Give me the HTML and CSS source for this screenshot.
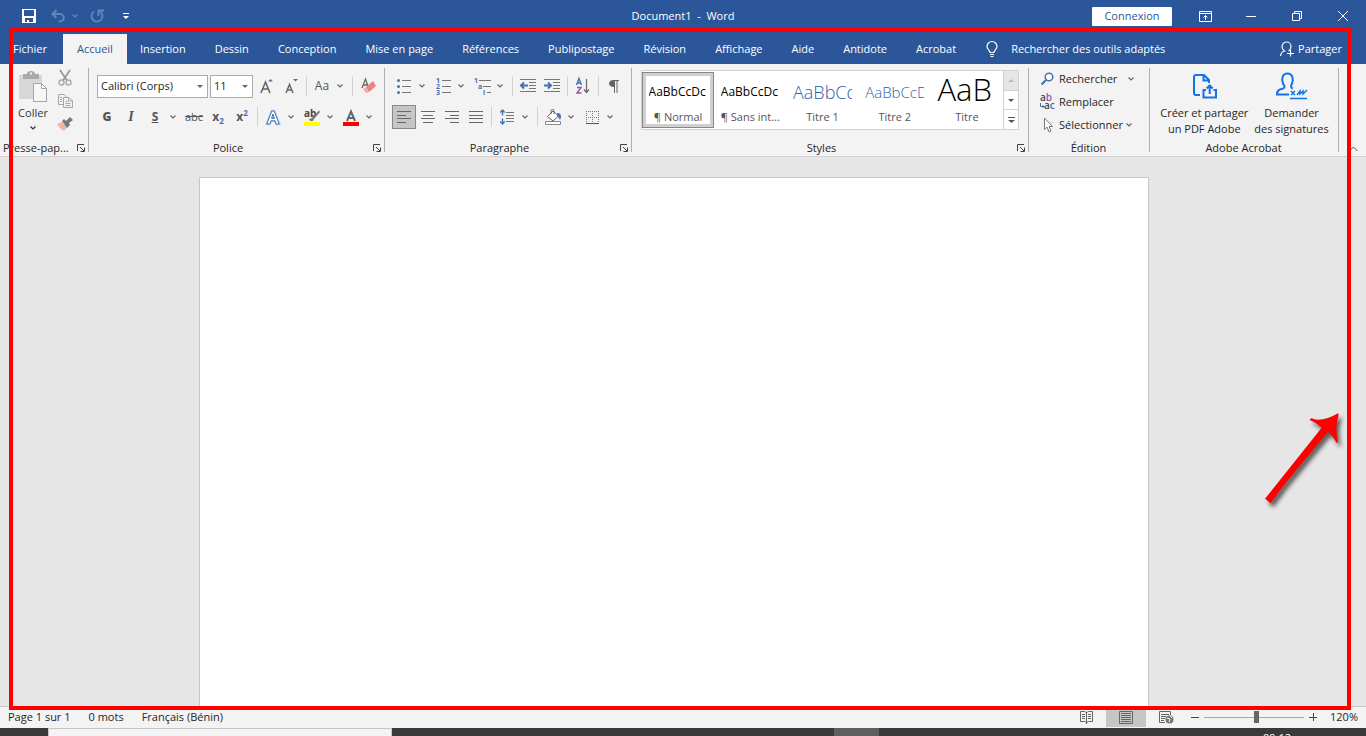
FILE: index.html
```
<!DOCTYPE html>
<html lang="fr">

<head>
    <meta charset="UTF-8">
    <meta name="viewport" content="width=device-width, initial-scale=1.0">
    <title>Document1 - Word</title>
    <link rel="stylesheet" href="styles.css">
</head>

<body>
    <svg class="defs" aria-hidden="true">
        <symbol id="chevron" viewBox="0 0 6 4"><path d="M.5.5 3 3 5.5.5" fill="none" stroke="currentColor" stroke-width="1.2" /></symbol>
        <symbol id="launcher" viewBox="0 0 8 8"><path d="M.5 7V.5H7M3 3l4 4M7.5 3.5v4h-4" fill="none" stroke="#444" /></symbol>
    </svg>

    <!-- Title bar -->
    <header class="titlebar">
        <div class="quick">
            <button class="quick-btn" aria-label="Enregistrer">
                <svg width="14" height="14"><path d="M0 0h14v14H0zM2 1v6h10V1zM3 9v4h2v-2h2v2h4V9z" fill="#fff" fill-rule="evenodd" /></svg>
            </button>
            <button class="quick-btn faded" aria-label="Annuler">
                <svg width="14" height="14"><path d="M5.5 1 1.5 5l4 4M2 5h7a3.500 3.500 0 0 1 0 7.500H7.500" fill="none" stroke="currentColor" stroke-width="2" /></svg>
            </button>
            <svg class="faded" width="6" height="4"><use href="#chevron" /></svg>
            <button class="quick-btn redo faded" aria-label="Répéter">
                <svg width="14" height="14"><path d="M4 2.5a5.500 5.500 0 1 0 6.500.3M8.500 7V1.500H14" fill="none" stroke="currentColor" stroke-width="1.8" /></svg>
            </button>
            <button class="quick-btn more" aria-label="Personnaliser la barre">
                <svg width="6" height="6"><path d="M0 0h6v1H0zM0 3h6L3 6z" fill="#fff" /></svg>
            </button>
        </div>
        <h1 class="title">Document1&nbsp; -&nbsp; Word</h1>
        <div class="window-tools">
            <button class="signin">Connexion</button>
            <button class="win-btn" aria-label="Options du ruban">
                <svg width="13" height="11"><path d="M.5.5h12v10H.5zM.5 2.5h12M6.5 9V4.5M4.500 6.500l2-2 2 2" fill="none" stroke="#fff" /></svg>
            </button>
            <button class="win-btn" aria-label="Réduire">
                <svg width="10" height="10"><path d="M0 5.5h10" stroke="#fff" /></svg>
            </button>
            <button class="win-btn" aria-label="Restaurer">
                <svg width="10" height="10"><path d="M.5 2.5h7v7h-7zM2.5 2.5v-2h7v7h-2" fill="none" stroke="#fff" /></svg>
            </button>
            <button class="win-btn" aria-label="Fermer">
                <svg width="10" height="10"><path d="m0 0 10 10M10 0 0 10" stroke="#fff" /></svg>
            </button>
        </div>
    </header>

    <!-- Tabs -->
    <nav class="tabs">
        <button class="tab">Fichier</button>
        <button class="tab active">Accueil</button>
        <button class="tab">Insertion</button>
        <button class="tab">Dessin</button>
        <button class="tab">Conception</button>
        <button class="tab">Mise en page</button>
        <button class="tab">Références</button>
        <button class="tab">Publipostage</button>
        <button class="tab">Révision</button>
        <button class="tab">Affichage</button>
        <button class="tab">Aide</button>
        <button class="tab">Antidote</button>
        <button class="tab">Acrobat</button>
        <button class="tell-me">
            <svg width="12" height="16"><path d="M4 11.5C4 9 1 8.5 1 5.5a5 5 0 0 1 10 0C11 8.5 8 9 8 11.5zM4 13.5h4M4.500 15.5h3" fill="none" stroke="#fff" stroke-width="1.2" /></svg>
            Rechercher des outils adaptés
        </button>
        <button class="share">
            <svg width="14" height="16"><path d="M.5 15c.3-3 2-4.500 4-5C2.500 8.500 2 7 2 5.500a4.500 4.500 0 1 1 9 0C11 7.500 10 9 8.500 10M10.500 9v6.500M7 12.500h7" fill="none" stroke="#fff" stroke-width="1.2" /></svg>
            Partager
        </button>
    </nav>

    <!-- Ribbon -->
    <section class="ribbon">
        <div class="group clipboard">
            <div class="clip-body">
                <button class="paste">
                    <svg width="28" height="31">
                        <path d="M0 4h23v24H0z" fill="#d9d6da" />
                        <path d="M4 3h4a4 3 0 0 1 8 0h4v5H4z" fill="#a9a9a9" />
                        <path d="M11 1.5h2v2h-2z" fill="#f3f3f3" />
                        <path d="M14.5 12.5h8l5 5v13h-13z" fill="#f6f6f6" stroke="#a5a5a5" />
                        <path d="M22.5 12.5v5h5" fill="none" stroke="#a5a5a5" />
                    </svg>
                    <span>Coller</span>
                    <svg width="6" height="4"><use href="#chevron" /></svg>
                </button>
                <div class="clip-tools">
                    <button class="btn" aria-label="Couper">
                        <svg width="14" height="16"><path d="m2 0 7 10.500M12 0 5 10.500" stroke="#999" stroke-width="1.8" /><circle cx="3.500" cy="12.500" r="2.500" fill="none" stroke="#aaa" stroke-width="1.4" /><circle cx="10.500" cy="12.500" r="2.500" fill="none" stroke="#aaa" stroke-width="1.4" /></svg>
                    </button>
                    <button class="btn" aria-label="Copier">
                        <svg width="15" height="14"><path d="M5 10.5H.5V.5H6L8.500 3M5.5 3.5H11l3.500 3.500v6.500h-9zM10.5 3.5V7h4M2 3.5h2M2 5.5h2M2 7.5h2M7.500 7.500h2M7.500 9.500h5M7.500 11.500h5" fill="none" stroke="#a5a5a5" /></svg>
                    </button>
                    <button class="btn" aria-label="Reproduire la mise en forme">
                        <svg width="16" height="14"><path d="m0 7 5-2 5 5-3 4C4 12.500 2 10.500 0 7z" fill="#f0b99b" /><path d="M5 4 7 2l2 2 4-4 3 3-4 3 1 2-3 3z" fill="#777" /></svg>
                    </button>
                </div>
            </div>
            <div class="group-label"><span>Presse-pap...</span><button class="launch" aria-label="Presse-papiers"><svg width="8" height="8"><use href="#launcher" /></svg></button></div>
        </div>

        <div class="group font">
            <div class="rows">
                <div class="row fields">
                    <select class="font-name" aria-label="Police"><option>Calibri (Corps)</option></select>
                    <select class="font-size" aria-label="Taille"><option>11</option></select>
                    <button class="btn" aria-label="Agrandir">
                        <svg width="14" height="16"><path d="M1 15 5.500 4 10 15M2.500 11h6" fill="none" stroke="#666" stroke-width="1.6" /><path d="M8 3.500 10.500 1 13 3.500z" fill="#4472b0" /></svg>
                    </button>
                    <button class="btn" aria-label="Réduire la police">
                        <svg width="14" height="16"><path d="M2 15 5.500 6.500 9 15M3 12h5" fill="none" stroke="#666" stroke-width="1.5" /><path d="M9 1h5l-2.500 2.500z" fill="#4472b0" /></svg>
                    </button>
                    <i class="sep"></i>
                    <button class="btn case">Aa</button><button class="arrow" aria-label="Casse"><svg width="6" height="4"><use href="#chevron" /></svg></button>
                    <i class="sep"></i>
                    <button class="btn" aria-label="Effacer la mise en forme">
                        <svg width="15" height="16"><path d="M1 10 4.500 1 7 8M2 7h4" fill="none" stroke="#666" stroke-width="1.3" /><path d="m5 9 7-6 3 5-7 6z" fill="#f08080" /><path d="m2 11 3-2 3 5-3 1z" fill="#f3aaa8" /></svg>
                    </button>
                </div>
                <div class="row">
                    <button class="btn letter"><b>G</b></button>
                    <button class="btn letter italic">I</button>
                    <button class="btn letter"><u>S</u></button><button class="arrow" aria-label="Soulignement"><svg width="6" height="4"><use href="#chevron" /></svg></button>
                    <button class="btn strike">abc</button>
                    <button class="btn letter">x<sub>2</sub></button>
                    <button class="btn letter">x<sup>2</sup></button>
                    <i class="sep"></i>
                    <button class="btn" aria-label="Effets de texte">
                        <svg width="14" height="15"><path d="M.8 14 5.800 1h2.400l5 13h-3l-1-3.200H4.800L3.800 14zM5.600 8.500h2.800L7 4z" fill="#fff" stroke="#b9d3f0" stroke-width="2.6" /><path d="M.8 14 5.800 1h2.400l5 13h-3l-1-3.200H4.800L3.800 14zM5.600 8.500h2.800L7 4z" fill="#fff" stroke="#4472b0" /></svg>
                    </button><button class="arrow" aria-label="Choix d'effets"><svg width="6" height="4"><use href="#chevron" /></svg></button>
                    <button class="btn marker" aria-label="Surlignage">
                        <svg width="16" height="17"><text x="0" y="8">ab</text><path d="M15 1.500 8 9l-3 1 1 2h3l1-2 6-7z" fill="#777" /><path d="M0 13h16v4H0z" fill="#ff0" /></svg>
                    </button><button class="arrow" aria-label="Couleur de surlignage"><svg width="6" height="4"><use href="#chevron" /></svg></button>
                    <button class="btn" aria-label="Couleur de police">
                        <svg width="16" height="17"><path d="M4 12 8 2.500 12 12M5.500 9h5" fill="none" stroke="#666" stroke-width="2" /><path d="M0 13h16v4H0z" fill="red" /></svg>
                    </button><button class="arrow" aria-label="Choix de couleur"><svg width="6" height="4"><use href="#chevron" /></svg></button>
                </div>
            </div>
            <div class="group-label"><span>Police</span><button class="launch" aria-label="Options de police"><svg width="8" height="8"><use href="#launcher" /></svg></button></div>
        </div>

        <div class="group paragraph">
            <div class="rows">
                <div class="row">
                    <button class="btn" aria-label="Puces">
                        <svg width="14" height="15"><path d="M5 1.500h9M5 7.500h9M5 13.500h9" stroke="#777" /><circle cx="1.500" cy="1.500" r="1.500" fill="#4472b0" /><circle cx="1.500" cy="7.500" r="1.500" fill="#4472b0" /><circle cx="1.500" cy="13.500" r="1.500" fill="#4472b0" /></svg>
                    </button><button class="arrow" aria-label="Choix de puces"><svg width="6" height="4"><use href="#chevron" /></svg></button>
                    <button class="btn numbers" aria-label="Numérotation">
                        <svg width="15" height="17"><path d="M6 2.500h9M6 8.500h9M6 14.500h9" stroke="#777" /><text x="0" y="5">1</text><text x="0" y="11">2</text><text x="0" y="17">3</text></svg>
                    </button><button class="arrow" aria-label="Choix de numérotation"><svg width="6" height="4"><use href="#chevron" /></svg></button>
                    <button class="btn numbers" aria-label="Liste à plusieurs niveaux">
                        <svg width="17" height="17"><path d="M5 2.500h12M9 8.500h8M13 14.500h4" stroke="#777" /><text x="0" y="5">1</text><text x="4" y="11">a</text><text x="9" y="17">i</text></svg>
                    </button><button class="arrow" aria-label="Choix de liste"><svg width="6" height="4"><use href="#chevron" /></svg></button>
                    <i class="sep"></i>
                    <button class="btn" aria-label="Diminuer le retrait">
                        <svg width="16" height="14"><path d="M0 .5h16M9 3.500h7M9 6.500h7M9 9.500h7M0 12.500h16" stroke="#777" /><path d="M4 3.500 1 6.500l3 3M1 6.500h7" fill="none" stroke="#4472b0" stroke-width="2" /></svg>
                    </button>
                    <button class="btn" aria-label="Augmenter le retrait">
                        <svg width="16" height="14"><path d="M0 .5h16M9 3.500h7M9 6.500h7M9 9.500h7M0 12.500h16" stroke="#777" /><path d="m4 3.500 3 3-3 3M7 6.500H0" fill="none" stroke="#4472b0" stroke-width="2" /></svg>
                    </button>
                    <i class="sep"></i>
                    <button class="btn" aria-label="Trier">
                        <svg width="14" height="16"><path d="M.5 7 3 .5 5.500 7M1.500 5h3" fill="none" stroke="#4472b0" stroke-width="1.4" /><path d="M1 9.500h4l-4 5.500h4.500" fill="none" stroke="#8a5aa5" stroke-width="1.4" /><path d="M10.500 1v13M8 11.500l2.500 3 2.500-3" fill="none" stroke="#666" stroke-width="1.2" /></svg>
                    </button>
                    <i class="sep"></i>
                    <button class="btn" aria-label="Afficher tout">
                        <svg width="10" height="13"><path d="M4.500 0H10v1H8.500v12h-1V1H6v12H5V7C2 7 0 5.700 0 3.500S2 0 4.500 0z" fill="#666" /></svg>
                    </button>
                </div>
                <div class="row">
                    <button class="btn pressed" aria-label="Aligner à gauche"><svg width="14" height="12"><path d="M0 .5h14M0 4.500h9M0 7.500h14M0 11.500h9" stroke="#666" /></svg></button>
                    <button class="btn" aria-label="Centrer"><svg width="14" height="12"><path d="M0 .5h14M2 4.500h10M0 7.500h14M2 11.500h10" stroke="#666" /></svg></button>
                    <button class="btn" aria-label="Aligner à droite"><svg width="14" height="12"><path d="M0 .5h14M5 4.500h9M0 7.500h14M5 11.500h9" stroke="#666" /></svg></button>
                    <button class="btn" aria-label="Justifier"><svg width="14" height="12"><path d="M0 .5h14M0 4.500h14M0 7.500h14M0 11.500h14" stroke="#666" /></svg></button>
                    <i class="sep"></i>
                    <button class="btn" aria-label="Interligne">
                        <svg width="14" height="16"><path d="M6 3.500h8M6 6.500h8M6 9.500h8M6 12.500h8" stroke="#777" /><path d="M2.500 1v5.500M2.500 9.500V15M.3 3.500l2.200-2.500 2.200 2.500M.3 12.500 2.500 15l2.200-2.500" fill="none" stroke="#4472b0" stroke-width="1.4" /></svg>
                    </button><button class="arrow" aria-label="Choix d'interligne"><svg width="6" height="4"><use href="#chevron" /></svg></button>
                    <i class="sep"></i>
                    <button class="btn" aria-label="Trame de fond">
                        <svg width="17" height="16"><path d="m8 2 5.500 5L8 12 2.500 7.500z" fill="#fff" stroke="#666" /><path d="M6 5V2a1.500 1.500 0 0 1 3 0v3" fill="none" stroke="#666" /><path d="M12 4c4 0 5 3 3 7-1-1-1-3-3-4z" fill="#4472b0" /><path d="M.5 12.500h15v3H.5z" fill="#fff" stroke="#888" /></svg>
                    </button><button class="arrow" aria-label="Choix de trame"><svg width="6" height="4"><use href="#chevron" /></svg></button>
                    <button class="btn" aria-label="Bordures">
                        <svg width="13" height="13"><path d="M0 .5h13M0 6.500h13M.5 0v12M6.500 0v12M12.500 0v12" fill="none" stroke="#777" stroke-dasharray="1 1" /><path d="M0 12.500h13" stroke="#555" /></svg>
                    </button><button class="arrow" aria-label="Choix de bordures"><svg width="6" height="4"><use href="#chevron" /></svg></button>
                </div>
            </div>
            <div class="group-label"><span>Paragraphe</span><button class="launch" aria-label="Options de paragraphe"><svg width="8" height="8"><use href="#launcher" /></svg></button></div>
        </div>

        <div class="group styles">
            <div class="gallery">
                <button class="style selected"><span class="preview">AaBbCcDc</span><span>¶ Normal</span></button>
                <button class="style"><span class="preview">AaBbCcDc</span><span>¶ Sans int...</span></button>
                <button class="style"><span class="preview heading1">AaBbCc</span><span>Titre 1</span></button>
                <button class="style"><span class="preview heading2">AaBbCcD</span><span>Titre 2</span></button>
                <button class="style"><span class="preview big">AaB</span><span>Titre</span></button>
                <div class="gallery-nav">
                    <button disabled aria-label="Précédent"><svg width="6" height="3"><path d="M0 3h6L3 0z" fill="#bbb" /></svg></button>
                    <button aria-label="Suivant"><svg width="6" height="3"><path d="M0 0h6L3 3z" fill="#555" /></svg></button>
                    <button aria-label="Autres"><svg width="7" height="6"><path d="M0 0h7v1H0zM0 3h7L3.500 6z" fill="#555" /></svg></button>
                </div>
            </div>
            <div class="group-label"><span>Styles</span><button class="launch" aria-label="Options de styles"><svg width="8" height="8"><use href="#launcher" /></svg></button></div>
        </div>

        <div class="group editing">
            <div class="edit-list">
                <button class="edit-btn">
                    <svg width="16" height="14"><circle cx="9" cy="5" r="3.800" fill="#fff" stroke="#4472b0" stroke-width="1.5" /><path d="M6 8 1.500 12.500" stroke="#4472b0" stroke-width="2.2" /></svg>
                    Rechercher
                    <svg class="edit-arrow far" width="6" height="4"><use href="#chevron" /></svg>
                </button>
                <button class="edit-btn">
                    <svg class="replace" width="16" height="16"><text x="0" y="7">a<tspan fill="#8a5aa5">b</tspan></text><text x="4" y="15">a<tspan fill="#4472b0">c</tspan></text><path d="M.5 9v3.500H4M2.500 11 4 12.500 2.500 14" fill="none" stroke="#4472b0" /></svg>
                    Remplacer
                </button>
                <button class="edit-btn">
                    <svg width="16" height="16"><path d="M4.500 1v11.500L7 10l2 5 2-1-2-4.500h3.500z" fill="#fff" stroke="#777" /></svg>
                    Sélectionner
                    <svg class="edit-arrow" width="6" height="4"><use href="#chevron" /></svg>
                </button>
            </div>
            <div class="group-label"><span>Édition</span></div>
        </div>

        <div class="group acrobat">
            <div class="acrobat-list">
                <button class="big-btn">
                    <svg width="26" height="28"><path d="M9 23H5a2 2 0 0 1-2-2V5a2 2 0 0 1 2-2h8l5 5v3M12.500 3v5.500H18M15 18h-2.500v7.500H25V18h-2.500M18.700 22v-8M15.700 16.500l3-3 3 3" fill="none" stroke="#1473e6" stroke-width="2" /></svg>
                    <span>Créer et partager<br>un PDF Adobe</span>
                </button>
                <button class="big-btn">
                    <svg width="32" height="28"><path d="M13 22.500H1c0-4 2-5 6-6 3-1 1-3 0-5C5 6 7 1.500 11.500 1.500S18 6 16 11.500c-1 2-2 4 1 5" fill="none" stroke="#1473e6" stroke-width="2" /><path d="M14 26.500h17M15 19l4 4M19 19l-4 4M21 23l3-4v3l3-3v3l4-4" fill="none" stroke="#1473e6" stroke-width="1.5" /></svg>
                    <span>Demander<br>des signatures</span>
                </button>
            </div>
            <div class="group-label"><span>Adobe Acrobat</span></div>
        </div>
        <button class="collapse" aria-label="Réduire le ruban"><svg width="9" height="6"><path d="m.5 5 4-4 4 4" fill="none" stroke="#555" /></svg></button>
    </section>

    <main class="workspace">
        <article class="sheet" contenteditable="true" aria-label="Document"></article>
    </main>

    <footer class="status">
        <span>Page 1 sur 1</span>
        <span>0 mots</span>
        <span>Français (Bénin)</span>
        <div class="views">
            <button class="view" aria-label="Mode lecture">
                <svg width="13" height="13"><path d="M.5.5h4l2 1 2-1h4v10h-4l-2 1-2-1h-4zM6.500 1v12M2 3.500h3M2 5.500h3M2 7.500h3M8 3.500h3M8 5.500h3M8 7.500h3" fill="none" stroke="#666" /></svg>
            </button>
            <button class="view current" aria-label="Page">
                <svg width="14" height="13"><path d="M.5.5h13v12H.5zM2 2.500h10M2 4.500h10M2 6.500h10M2 8.500h10M2 10.500h10" fill="none" stroke="#666" /></svg>
            </button>
            <button class="view" aria-label="Web">
                <svg width="15" height="13"><path d="M6 11.500H.5V.5h11V4M2 3.500h8M2 5.500h5M2 7.500h4M2 9.500h3" fill="none" stroke="#666" /><circle cx="10.500" cy="8.500" r="4" fill="#777" /><path d="m8 7 3 1-1 3M11 5l2 2" fill="none" stroke="#f3f3f3" /></svg>
            </button>
        </div>
        <button class="zoom-btn" aria-label="Zoom arrière"><svg width="8" height="8"><path d="M0 4.500h8" stroke="#444" /></svg></button>
        <input class="zoom" type="range" min="0" max="100" value="53" aria-label="Zoom">
        <button class="zoom-btn" aria-label="Zoom avant"><svg width="8" height="8"><path d="M0 4.500h8M4.500 0v8" stroke="#444" /></svg></button>
        <span class="percent">120%</span>
    </footer>

    <div class="taskbar">
        <div class="task-search"></div>
        <div class="task-app"></div>
        <time class="clock">09:12</time>
    </div>

    <!-- Highlight frame and pointer -->
    <div class="frame"></div>
    <svg class="pointer" viewBox="0 0 378 390" width="126" height="130" aria-hidden="true">
        <path d="M75 326 L120 270 L245 113 Q230 98 209 90 Q213 80 222 88 Q256 93 294 70 Q298 74 292 90 Q285 122 294 154 L290 160 Q279 136 264 126 Q242 154 224 174 Q160 252 130 288 L92 340 Z" fill="red" />
    </svg>
</body>

</html>
```
FILE: styles.css
```
* {
    box-sizing: border-box;
}

body {
    margin: 0;
    height: 100vh;
    display: flex;
    flex-direction: column;
    position: relative;
    overflow: hidden;
    background-color: #e6e6e6;
    color: #262626;
    font-family: "Open Sans", "Noto Sans", sans-serif;
    font-size: 11px;
    line-height: 16px;
}

button {
    border: 0;
    padding: 0;
    background: none;
    color: inherit;
    font: inherit;
    white-space: nowrap;
}

svg {
    display: block;
    flex-shrink: 0;
    overflow: visible;
}

.defs {
    position: absolute;
    width: 0;
    height: 0;
}

/* title bar */
.titlebar {
    display: grid;
    grid-template-columns: 1fr auto 1fr;
    align-items: center;
    height: 34px;
    padding-bottom: 2px;
    background-color: #2b579a;
    color: #fff;
}

.quick {
    display: flex;
    align-items: center;
    padding-left: 22px;
}

.quick-btn {
    margin-right: 15px;
}

.quick .faded {
    color: #5f86bd;
}

.quick .quick-btn.faded {
    margin-right: 7px;
}

.quick .redo.faded {
    margin: 0 19px 0 12px;
}

.title {
    margin: 0;
    font-size: 11px;
    font-weight: normal;
}

.window-tools {
    display: flex;
    align-items: center;
    justify-content: flex-end;
}

.signin {
    width: 80px;
    height: 19px;
    margin-right: 10px;
    border-radius: 1px;
    background-color: #fff;
    color: #2b579a;
}

.win-btn {
    display: flex;
    justify-content: center;
    width: 46px;
}

/* tabs */
.tabs {
    display: flex;
    height: 30px;
    background-color: #2b579a;
    color: #fff;
}

.tab {
    padding: 0 16px 0 13px;
}

.tab.active {
    padding: 0 14px;
    background-color: #f3f3f3;
    color: #2b579a;
}

.tell-me,
.share {
    display: flex;
    align-items: center;
}

.tell-me {
    gap: 13px;
    margin-left: 14px;
}

.share {
    gap: 4px;
    margin-left: auto;
    margin-right: 24px;
}

/* ribbon */
.ribbon {
    display: flex;
    height: 93px;
    background-color: #f3f3f3;
    border-bottom: 1px solid #d2d2d2;
}

.group {
    display: flex;
    flex-direction: column;
    justify-content: space-between;
    flex-shrink: 0;
    background: linear-gradient(#b1b1b1, #b1b1b1) right 4px / 1px 84px no-repeat;
}

.group-label {
    display: flex;
    align-items: center;
    height: 16px;
    padding-right: 4px;
}

.group-label span {
    flex: 1;
    padding-left: 2px;
    text-align: center;
}

.group-label span:not(:last-child) {
    padding: 0 6px 0 0;
}

.rows {
    display: flex;
    flex-direction: column;
    gap: 7px;
    padding-top: 10px;
}

.row {
    display: flex;
    align-items: center;
    height: 24px;
}

.btn {
    display: flex;
    align-items: center;
    justify-content: center;
    width: 24px;
    height: 24px;
    color: #555;
}

.btn.pressed {
    background-color: #c5c5c5;
    border: 1px solid #888;
}

.arrow {
    display: flex;
    align-items: center;
    justify-content: center;
    width: 12px;
    height: 24px;
    margin-right: 3px;
    color: #666;
}

.sep {
    width: 1px;
    height: 20px;
    margin: 0 3px;
    background-color: #d2d2d2;
}

/* clipboard */
.clipboard {
    width: 89px;
}

.clipboard .group-label span:not(:last-child) {
    padding: 0 0 0 3px;
    text-align: left;
}

.clip-body {
    display: flex;
    padding: 2px 0 0 13px;
}

.paste {
    display: flex;
    flex-direction: column;
    align-items: center;
    width: 40px;
    padding-top: 5px;
    color: #333;
}

.paste span {
    margin: 3px 0 5px;
}

.clip-tools .btn {
    height: 23px;
}

/* font */
.font {
    width: 296px;
}

.font .rows {
    padding-left: 6px;
}

.fields {
    padding-left: 2px;
}

.font-name,
.font-size {
    height: 23px;
    padding: 0 3px;
    border: 1px solid #ababab;
    border-radius: 0;
    appearance: none;
    background: #fff url("data:image/svg+xml,%3Csvg xmlns='http://www.w3.org/2000/svg' width='6' height='3'%3E%3Cpath d='M0 0h6L3 3z' fill='%23666'/%3E%3C/svg%3E") right 4px center no-repeat;
    color: #262626;
    font: inherit;
}

.font-name {
    width: 111px;
    margin-right: 2px;
}

.font-size {
    width: 43px;
    margin-right: 2px;
}

.case {
    font-size: 12px;
}

.letter {
    font-size: 12px;
    font-weight: bold;
}

.italic {
    font-family: "Liberation Serif", serif;
    font-size: 14px;
    font-style: italic;
}

.letter sub,
.letter sup {
    color: #4472b0;
    font-size: 8px;
    line-height: 8px;
}

.letter sub {
    align-self: flex-end;
    margin-bottom: 4px;
}

.letter sup {
    align-self: flex-start;
    margin-top: 4px;
}

.strike {
    text-decoration: line-through;
}

.marker text {
    fill: #444;
    font-size: 10px;
    font-weight: bold;
}

.numbers text {
    fill: #4472b0;
    font-size: 7px;
    font-weight: bold;
}

/* paragraph */
.paragraph {
    width: 247px;
}

.paragraph .rows {
    padding-left: 7px;
}

/* styles */
.styles {
    width: 397px;
}

.gallery {
    display: flex;
    height: 60px;
    margin: 6px 10px 0 9px;
    border: 1px solid #d2d2d2;
    background-color: #fff;
}

.style {
    display: flex;
    flex-direction: column;
    align-items: center;
    flex: 1;
    min-width: 0;
    margin: 1px 0;
    color: #555;
}

.style.selected {
    outline: 1px solid #888;
    outline-offset: -1px;
    box-shadow: inset 0 0 0 4px #d0d0d0;
}

.preview {
    width: 59px;
    height: 28px;
    margin: 7px 0 2px;
    overflow: hidden;
    color: #000;
    font-size: 12px;
    line-height: 26px;
    text-align: left;
}

.heading1,
.heading2 {
    color: #2b62ae;
    font-weight: 300;
}

.heading1 {
    font-size: 18px;
}

.heading2 {
    font-size: 15px;
}

.big {
    font-size: 31px;
    font-weight: 300;
    line-height: 20px;
}

.gallery-nav {
    display: flex;
    flex-direction: column;
    width: 15px;
    border-left: 1px solid #d2d2d2;
}

.gallery-nav button {
    display: flex;
    align-items: center;
    justify-content: center;
    flex: 1;
}

.gallery-nav button + button {
    border-top: 1px solid #d2d2d2;
}

.gallery-nav button:disabled {
    background-color: #e6e6e6;
}

/* editing */
.editing {
    width: 121px;
}

.edit-list {
    padding: 3px 0 0 11px;
}

.edit-btn {
    display: flex;
    align-items: center;
    gap: 3px;
    height: 23px;
}

.edit-arrow {
    color: #666;
}

.edit-arrow.far {
    margin-left: 8px;
}

.replace text {
    fill: #444;
    font-size: 10px;
    font-weight: 600;
}

/* acrobat */
.acrobat {
    width: 189px;
}

.acrobat-list {
    display: flex;
    justify-content: center;
    gap: 6px;
    padding-top: 8px;
}

.big-btn {
    display: flex;
    flex-direction: column;
    align-items: center;
    gap: 5px;
}

.collapse {
    align-self: flex-end;
    margin: 0 0 4px 10px;
}

/* document */
.workspace {
    flex: 1;
    min-height: 0;
    display: flex;
    justify-content: center;
    padding: 20px 18px 0 0;
}

.sheet {
    width: 950px;
    border: 1px solid #c6c6c6;
    border-bottom: 0;
    background-color: #fff;
}

/* status bar */
.status {
    display: flex;
    align-items: center;
    height: 22px;
    padding: 0 8px 1px;
    background-color: #f3f3f3;
    border-top: 1px solid #c6c6c6;
}

.status span {
    margin-right: 18px;
}

.views {
    display: flex;
    align-self: stretch;
    margin-left: auto;
}

.view {
    display: flex;
    align-items: center;
    justify-content: center;
    width: 40px;
}

.view.current {
    background-color: #c6c6c6;
}

.zoom-btn {
    padding: 4px 5px;
}

.zoom {
    width: 100px;
    height: 12px;
    margin: 0;
    appearance: none;
    background: linear-gradient(#a6a6a6, #a6a6a6) center / 100% 1px no-repeat;
}

.zoom::-webkit-slider-thumb {
    appearance: none;
    width: 5px;
    height: 12px;
    background-color: #666;
}

.status .percent {
    margin: 0 0 0 8px;
}

/* taskbar */
.taskbar {
    display: flex;
    height: 8px;
    overflow: hidden;
    background-color: #3a3a3a;
    color: #fff;
}

.task-search {
    width: 344px;
    margin-left: 48px;
    border: 1px solid #c6c6c6;
    border-bottom: 0;
    background-color: #f3f3f3;
}

.task-app {
    width: 45px;
    margin-left: 442px;
    background-color: #5f5f5f;
}

.clock {
    margin: 2px 75px 0 auto;
}

/* highlight */
.frame {
    position: absolute;
    top: 28px;
    right: 15px;
    bottom: 26px;
    left: 9px;
    border: 4px solid red;
    pointer-events: none;
}

.pointer {
    position: absolute;
    top: 390px;
    right: 0;
    filter: drop-shadow(3px 4px 2px rgba(0, 0, 0, 0.6));
    pointer-events: none;
}
```
